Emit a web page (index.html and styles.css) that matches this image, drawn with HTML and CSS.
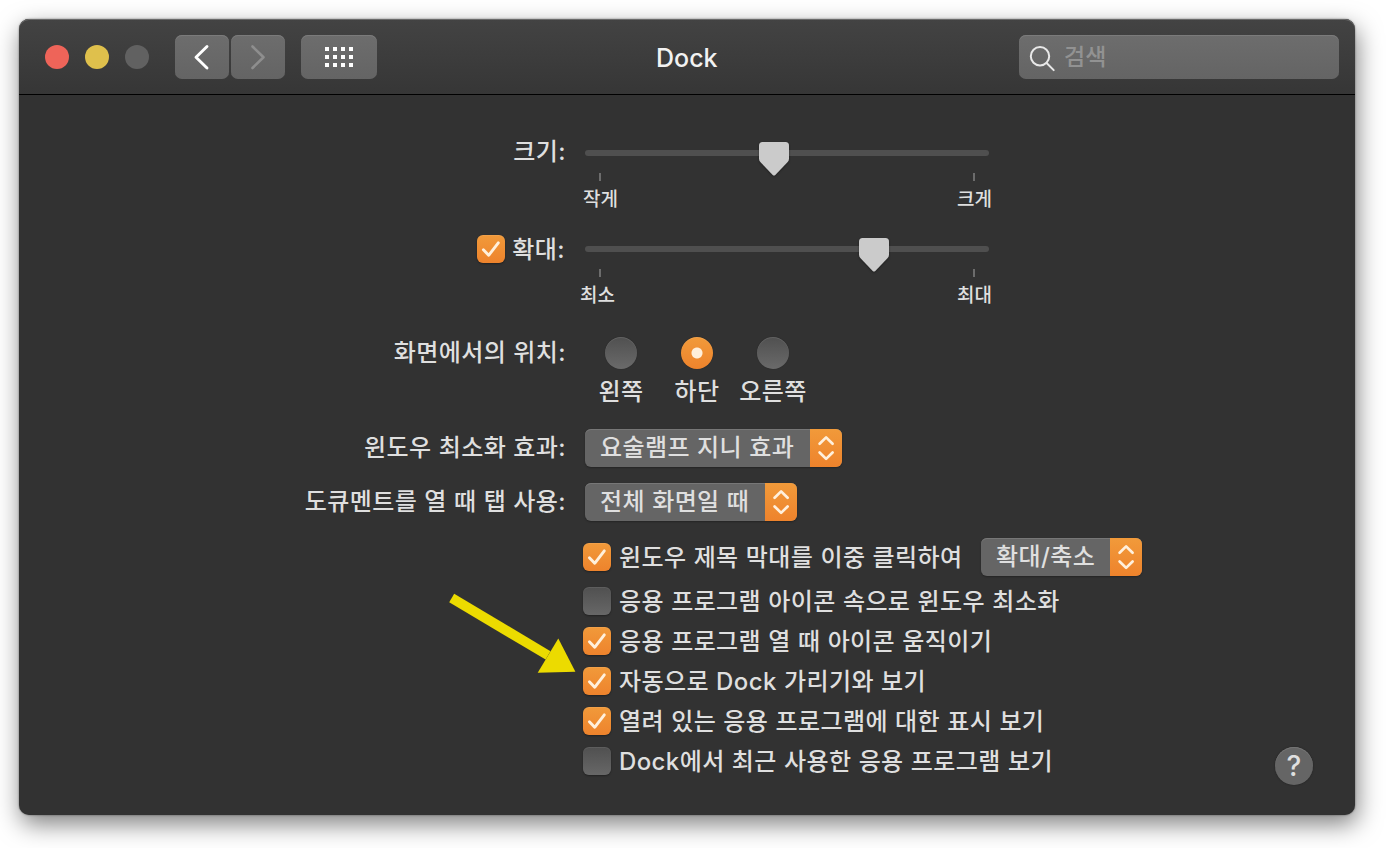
FILE: index.html
```
<!DOCTYPE html>
<html lang="ko">
<head>
    <meta charset="UTF-8">
    <meta name="viewport" content="width=device-width, initial-scale=1.0">
    <title>Dock</title>
    <link rel="stylesheet" href="styles.css">
</head>
<body>
    <!-- 공용 아이콘 -->
    <svg class="symbols" width="0" height="0">
        <symbol id="check" viewBox="0 0 28 28">
            <path d="M6.4 14.8L11.7 20.3L21.3 7.8" fill="none" stroke="#fff0dc" stroke-width="2.9" stroke-linecap="round" stroke-linejoin="round"/>
        </symbol>
        <symbol id="updown" viewBox="0 0 32 38">
            <path d="M9.6 14.8L16.1 8.4L22.6 14.8M9.6 23.5L16.1 29.9L22.6 23.5" fill="none" stroke="#fff0dc" stroke-width="2.7" stroke-linecap="round" stroke-linejoin="round"/>
        </symbol>
        <symbol id="thumb" viewBox="0 0 30 34">
            <path d="M3.5 0H26.5Q30 0 30 3.5V16.5Q30 18.5 28.7 20L16.3 32.9Q15 34.2 13.7 32.9L1.3 20Q0 18.5 0 16.5V3.5Q0 0 3.5 0Z" fill="#cbcbcb"/>
        </symbol>
    </svg>

    <div class="window">
        <div class="toolbar">
            <div class="lights">
                <span class="light red"></span>
                <span class="light yellow"></span>
                <span class="light gray"></span>
            </div>
            <div class="nav">
                <button class="tool-btn">
                    <svg width="54" height="44" viewBox="0 0 54 44"><path d="M32 11.5L21 22.3L32 33" fill="none" stroke="#fff" stroke-width="2.9" stroke-linecap="round" stroke-linejoin="round"/></svg>
                </button>
                <button class="tool-btn">
                    <svg width="54" height="44" viewBox="0 0 54 44"><path d="M21.5 11.5L32.5 22.3L21.5 33" fill="none" stroke="#8e8e8e" stroke-width="2.6" stroke-linecap="round" stroke-linejoin="round"/></svg>
                </button>
            </div>
            <button class="tool-btn grid-btn">
                <svg width="28" height="20" viewBox="0 0 28 20" fill="#fff">
                    <path d="M0 0h4v4h-4zM8 0h4v4h-4zM16 0h4v4h-4zM24 0h4v4h-4zM0 8h4v4h-4zM8 8h4v4h-4zM16 8h4v4h-4zM24 8h4v4h-4zM0 16h4v4h-4zM8 16h4v4h-4zM16 16h4v4h-4zM24 16h4v4h-4z"/>
                </svg>
            </button>
            <div class="title">Dock</div>
            <div class="search">
                <svg width="28" height="28" viewBox="0 0 28 28"><g fill="none" stroke="#e8e8e8" stroke-width="2" stroke-linecap="round"><circle cx="12" cy="12.3" r="9.2"/><path d="M18.6 19L25.7 26.1"/></g></svg>
                <span>검색</span>
            </div>
        </div>

        <div class="content">
            <div class="row slider-row">
                <div class="label">크기:</div>
                <div class="slider">
                    <div class="track"><svg class="thumb thumb-size"><use href="#thumb"/></svg></div>
                    <div class="ticks"><i></i><i></i></div>
                    <div class="scale"><span>작게</span><span>크게</span></div>
                </div>
            </div>
            <div class="row slider-row">
                <div class="label zoom-label"><span class="checkbox on"><svg><use href="#check"/></svg></span><span class="check-text">확대:</span></div>
                <div class="slider">
                    <div class="track"><svg class="thumb thumb-zoom"><use href="#thumb"/></svg></div>
                    <div class="ticks"><i></i><i></i></div>
                    <div class="scale scale-zoom"><span>최소</span><span>최대</span></div>
                </div>
            </div>

            <div class="row position-row">
                <div class="label">화면에서의 위치:</div>
                <div class="radios">
                    <div class="option"><span class="radio"></span>왼쪽</div>
                    <div class="option"><span class="radio on"></span>하단</div>
                    <div class="option"><span class="radio"></span>오른쪽</div>
                </div>
            </div>

            <div class="row select-row">
                <div class="label">윈도우 최소화 효과:</div>
                <div class="select select-genie"><span>요술램프 지니 효과</span><i><svg><use href="#updown"/></svg></i></div>
            </div>
            <div class="row select-row">
                <div class="label">도큐멘트를 열 때 탭 사용:</div>
                <div class="select select-tab"><span>전체 화면일 때</span><i><svg><use href="#updown"/></svg></i></div>
            </div>

            <div class="checks">
                <div class="check-row first">
                    <span class="checkbox on"><svg><use href="#check"/></svg></span>
                    <span class="check-text">윈도우 제목 막대를 이중 클릭하여</span>
                    <div class="select select-click"><span>확대/축소</span><i><svg><use href="#updown"/></svg></i></div>
                </div>
                <div class="check-row"><span class="checkbox"></span><span class="check-text">응용 프로그램 아이콘 속으로 윈도우 최소화</span></div>
                <div class="check-row"><span class="checkbox on"><svg><use href="#check"/></svg></span><span class="check-text">응용 프로그램 열 때 아이콘 움직이기</span></div>
                <div class="check-row"><span class="checkbox on"><svg><use href="#check"/></svg></span><span class="check-text">자동으로 Dock 가리기와 보기</span></div>
                <div class="check-row"><span class="checkbox on"><svg><use href="#check"/></svg></span><span class="check-text">열려 있는 응용 프로그램에 대한 표시 보기</span></div>
                <div class="check-row"><span class="checkbox"></span><span class="check-text">Dock에서 최근 사용한 응용 프로그램 보기</span></div>
            </div>
        </div>

        <button class="help">?</button>

        <!-- 강조 화살표 -->
        <svg class="arrow" width="128" height="82" viewBox="0 0 128 82" fill="#ecdb00">
            <path d="M5.2 1.7L101.5 59.2L96.6 67.6L0.2 10.2Z"/>
            <path d="M109.3 46.5L126.4 79.8L88.7 80.8Z"/>
        </svg>
    </div>
</body>
</html>
```
FILE: styles.css
```
* {
    box-sizing: border-box;
}
body {
    margin: 0;
    padding: 19px 33px 33px 19px;
    height: 848px;
    overflow: hidden;
    background-color: #fff;
    color: #dfdfdf;
    font-family: Inter, "Noto Sans CJK KR", sans-serif;
    font-size: 24px;
    font-weight: 500;
    line-height: 38px;
    letter-spacing: 0.4px;
    word-spacing: 0.4px;
    white-space: nowrap;
}
svg {
    display: block;
}
.symbols {
    position: absolute;
}
button {
    padding: 0;
    border: none;
    font: inherit;
    color: inherit;
}
.window {
    position: relative;
    width: 1336px;
    height: 796px;
    border-radius: 10px;
    background-color: #323232;
    box-shadow: 0 0 2px rgba(0,0,0,0.5), 2px 9px 24px rgba(0,0,0,0.5);
}

/* 툴바 */
.toolbar {
    display: flex;
    align-items: center;
    height: 76px;
    padding: 0 16px 0 26px;
    border-radius: 10px 10px 0 0;
    border-bottom: 1px solid #000;
    background: linear-gradient(#434343, #363636);
    box-shadow: inset 0 1px 0 #6a6a6a;
}
.lights {
    display: flex;
    gap: 16px;
    margin-right: 26px;
}
.light {
    width: 24px;
    height: 24px;
    border-radius: 50%;
}
.red {
    background-color: #ee6459;
}
.yellow {
    background-color: #dfc04c;
}
.gray {
    background-color: #616161;
}
.nav {
    display: flex;
    gap: 2px;
    margin-right: 16px;
}
.tool-btn {
    width: 54px;
    height: 44px;
    border-radius: 7px;
    background: linear-gradient(#6d6d6d, #646464);
    box-shadow: inset 0 1px 0 #7b7b7b;
}
.grid-btn {
    display: flex;
    width: 76px;
    align-items: center;
    justify-content: center;
}
.title {
    flex: 1;
    padding: 2px 0 0 279px;
    color: #f2f2f2;
    font-size: 25px;
    letter-spacing: 0;
}
.search {
    display: flex;
    align-items: center;
    width: 320px;
    height: 44px;
    padding-left: 9px;
    gap: 8px;
    border-radius: 7px;
    background: linear-gradient(#6d6d6d, #646464);
    box-shadow: inset 0 1px 0 #7b7b7b;
    color: #929292;
    font-size: 23px;
    letter-spacing: 0;
}
.search svg {
    margin-top: 2px;
}

/* 설정 내용 */
.content {
    padding-top: 38px;
}
.row {
    display: flex;
}
.label {
    width: 547px;
    margin-right: 19px;
    text-align: right;
}
.slider-row {
    height: 96px;
}
.zoom-label {
    display: flex;
    justify-content: flex-end;
    align-items: center;
    height: 40px;
    gap: 7px;
    padding-right: 1px;
}
.slider {
    width: 404px;
    padding-top: 17px;
}
.track {
    position: relative;
    height: 6px;
    border-radius: 3px;
    background-color: #4f4f4f;
}
.thumb {
    position: absolute;
    top: -8px;
    width: 30px;
    height: 34px;
    filter: drop-shadow(0 1px 1px rgba(0,0,0,0.35));
}
.thumb-size {
    left: 174px;
}
.thumb-zoom {
    left: 274px;
}
.ticks {
    display: flex;
    justify-content: space-between;
    padding: 17px 14px 0;
}
.ticks i {
    width: 2px;
    height: 8px;
    background-color: #6c6c6c;
}
.scale {
    display: flex;
    justify-content: space-between;
    margin: 5px -3px 0 -2px;
    font-size: 19px;
    line-height: 28px;
    letter-spacing: 0;
}
.scale-zoom {
    margin-left: -5px;
}
.position-row {
    height: 104px;
    padding-top: 9px;
}
.radios {
    display: flex;
    padding-top: 3px;
    margin-left: -2px;
}
.option {
    display: flex;
    flex-direction: column;
    align-items: center;
    width: 76px;
    gap: 4px;
}
.radio {
    width: 32px;
    height: 32px;
    border-radius: 50%;
    background: linear-gradient(#505050, #6a6a6a);
    box-shadow: 0 0 1px #222, inset 0 1px 0 rgba(255,255,255,0.1);
}
.radio.on {
    background: radial-gradient(circle, #ffefdb 5px, transparent 6px), linear-gradient(#f19a3a, #ee832c);
}
.select-row {
    height: 54px;
}
.select {
    display: flex;
    height: 38px;
    border-radius: 6px;
    overflow: hidden;
    background-color: #656565;
    box-shadow: 0 1px 2px rgba(0,0,0,0.3), inset 0 1px 0 #777;
}
.select span {
    flex: 1;
    padding-left: 15px;
}
.select i {
    width: 32px;
    background: linear-gradient(#f19a3a, #ee832c);
}
.select svg {
    width: 32px;
    height: 38px;
}
.select-genie {
    width: 257px;
}
.select-tab {
    width: 212px;
}
.select-click {
    width: 161px;
    margin-left: 11px;
}
.checks {
    padding-left: 564px;
}
.check-row {
    display: flex;
    align-items: center;
    height: 40px;
    gap: 8px;
}
.check-row.first {
    margin-bottom: 4px;
}
.check-text {
    padding-top: 2px;
}
.first .check-text {
    width: 343px;
}
.checkbox {
    width: 28px;
    height: 28px;
    border-radius: 6px;
    background: linear-gradient(#505050, #676767);
    box-shadow: 0 1px 2px rgba(0,0,0,0.35), inset 0 1px 0 rgba(255,255,255,0.08);
}
.checkbox.on {
    background: linear-gradient(#f19a3a, #ee832c);
}
.checkbox svg {
    width: 28px;
    height: 28px;
}
.help {
    position: absolute;
    right: 42px;
    bottom: 30px;
    width: 38px;
    height: 38px;
    border-radius: 50%;
    background-color: #656565;
    box-shadow: 0 0 2px rgba(0,0,0,0.4), inset 0 1px 0 #757575;
    font-size: 28px;
    font-weight: 500;
    line-height: 39px;
}
.arrow {
    position: absolute;
    left: 430px;
    top: 573px;
}
```
